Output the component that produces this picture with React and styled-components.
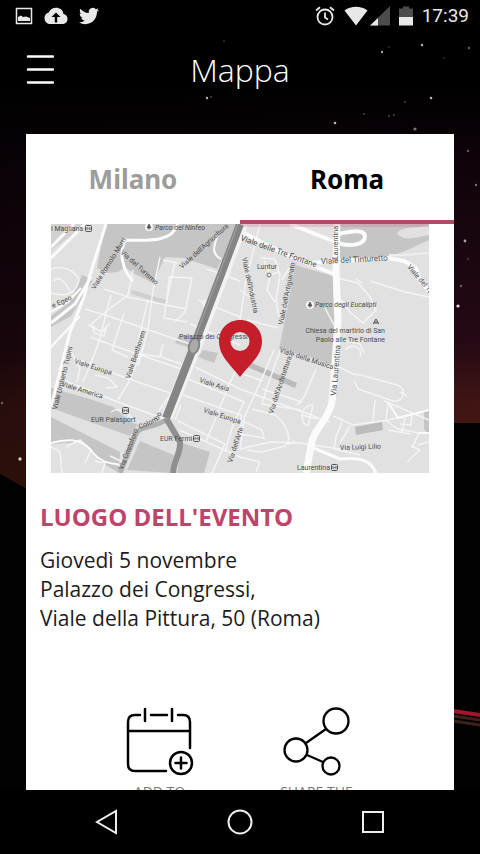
import styled, { createGlobalStyle, css } from 'styled-components'

const GlobalStyle = createGlobalStyle`
  body {
    margin: 0;
    background: #000;
    font-family: "Open Sans", "Noto Sans", sans-serif;
  }

  * {
    box-sizing: border-box;
  }

  button {
    padding: 0;
    border: 0;
    background: none;
    color: inherit;
    font: inherit;
    cursor: pointer;
  }

  svg {
    display: block;
  }
`

const Screen = styled.div`
  position: relative;
  display: flex;
  flex-direction: column;
  height: 100vh;
  overflow: hidden;
  color: #fff;
`

const Sky = styled.svg`
  position: absolute;
  inset: 0;
  z-index: -1;
  width: 100%;
  height: 100%;
`

const StatusBar = styled.div`
  display: flex;
  justify-content: space-between;
  align-items: center;
  height: 32px;
  padding: 0 11px 0 15px;
  color: #e8e8e8;
`

const StatusGroup = styled.div`
  display: flex;
  align-items: center;
  gap: ${props => props.$gap}px;
`

const Clock = styled.time`
  font-family: Roboto, sans-serif;
  font-size: 19px;
  font-weight: 400;
  line-height: 32px;
`

const Header = styled.header`
  display: grid;
  grid-template-columns: 28px 1fr 28px;
  align-items: center;
  height: 76px;
  margin-bottom: 26px;
  padding: 0 26px;
`

const Title = styled.h1`
  margin: 0;
  font-size: 32px;
  font-weight: 300;
  line-height: 40px;
  text-align: center;
`

const Card = styled.main`
  flex: 1;
  min-height: 0;
  margin: 0 26px;
  overflow: hidden;
  background: #fff;
  color: #1c1c1c;
`

const Tabs = styled.div`
  display: grid;
  grid-template-columns: 1fr 1fr;
`

const Tab = styled.button`
  height: 90px;
  padding-top: 4px;
  border-bottom: 4px solid transparent;
  color: #9c9c9c;
  font-family: "Noto Sans", sans-serif;
  font-size: 26px;
  font-weight: 700;

  ${props => props.$active && css`
    color: #000;
    border-color: #b04a66;
  `}
`

const MapImage = styled.svg`
  width: calc(100% - 50px);
  height: auto;
  margin: 0 25px;
  font-family: Roboto, sans-serif;
  font-size: 7px;
  fill: #4c4c4c;
`

const Place = styled.section`
  padding: 28px 14px 0;
`

const PlaceTitle = styled.h2`
  margin: 0 0 13px;
  color: #c0446a;
  font-size: 24px;
  font-weight: 700;
  line-height: 32px;
`

const Address = styled.p`
  margin: 0;
  font-size: 21px;
  line-height: 29px;
`

const Actions = styled.div`
  display: flex;
  justify-content: center;
  gap: 80px;
  padding: 73px 4px 0 0;
`

const Action = styled.button`
  display: flex;
  flex-direction: column;
  align-items: center;
  gap: 4px;
  width: 77px;
  color: #000;

  span {
    color: #777;
    font-size: 14px;
    line-height: 20px;
    white-space: nowrap;
  }
`

const NavBar = styled.nav`
  display: flex;
  justify-content: center;
  align-items: center;
  gap: 101px;
  height: 64px;
  background: #000;
`

const stars = [
  [207, 98, 1.2, 0.8], [211, 97, 1, 0.3], [224, 41, 1, 0.2], [382, 52, 1.2, 0.7],
  [389, 47, 1, 0.2], [422, 45, 1.2, 0.8], [469, 48, 1.2, 0.4], [444, 58, 1, 0.2],
  [431, 98, 1.3, 0.8], [405, 102, 1, 0.3], [335, 123, 1.3, 0.8], [364, 114, 1, 0.3],
  [389, 116, 1, 0.3], [394, 115, 1, 0.3], [415, 129, 1.6, 0.5], [468, 151, 1.2, 0.4],
  [476, 185, 1.2, 0.5], [465, 241, 1.4, 0.7], [468, 259, 1.2, 0.2], [461, 286, 1.2, 0.4],
  [458, 306, 1.6, 1], [2, 403, 1.2, 0.4], [20, 459, 1.7, 0.9],
]

const NightSky = () => (
  <Sky viewBox="0 0 480 854" preserveAspectRatio="xMidYMid slice" aria-hidden="true">
    <defs>
      <linearGradient id="dusk" x1="0" y1="0" x2="0" y2="1">
        <stop offset="0.1" stopColor="#000" />
        <stop offset="0.2" stopColor="#10040b" />
        <stop offset="0.4" stopColor="#250914" />
        <stop offset="0.47" stopColor="#401514" />
        <stop offset="0.57" stopColor="#481a10" />
      </linearGradient>
      <linearGradient id="shade" x1="0" y1="0" x2="1" y2="0">
        <stop offset="0" stopColor="#000" stopOpacity="0.4" />
        <stop offset="1" stopColor="#000" stopOpacity="0" />
      </linearGradient>
    </defs>
    <rect width="480" height="854" fill="url(#dusk)" />
    <rect width="480" height="854" fill="url(#shade)" />
    {stars.map(([x, y, r, o]) => (
      <circle key={`${x}-${y}`} cx={x} cy={y} r={r} fill="#f0dfe2" opacity={o} />
    ))}
    <path d="M0 474 27 489V423H480V854H0Z" fill="#020202" />
    <path d="M453 711 480 715" stroke="#a5152a" strokeWidth="4" />
    <path d="M453 716 480 720M453 721 480 725" stroke="#3a221a" strokeWidth="3" />
  </Sky>
)

/* [text, x, y, rotation, size] */
const labels = [
  ['i Magliana', 51, 231, 0], ['Viale Romolo Murri', 95, 290, -58], ['Via del Turismo', 120, 253, 42],
  ["Viale dell'Agricoltura", 182, 269, -42], ['e Egeo', 53, 308, -24], ['Viale Beethoven', 130, 379, -72],
  ['Viale delle Tre Fontane', 240, 240, 20, 8], ['Viale del Tinturetto', 321, 264, -3, 8],
  ['Viale del Tu', 407, 267, 50], ["Viale dell'Artigianato", 283, 325, -79],
  ['Laurentina', 338, 259, -90], ['Viale Europa', 74, 363, 18], ['Viale America', 61, 386, 17],
  ['Viale Umberto Tupini', 57, 410, -76], ['Viale Asia', 199, 382, 18], ['Viale Europa', 203, 412, 18],
  ['Viale della Musica', 279, 352, 18], ["Via dell'Architettura", 273, 414, -72],
  ['Via Laurentina', 336, 396, -85, 8], ["Via dell'Arte", 232, 463, -72], ['Via Luigi Lilio', 340, 450, -2],
  ['EUR Palasport', 91, 422, 0], ['EUR Fermi', 160, 441, 0], ['Laurentina', 297, 470, 0],
  ['Luntur', 257, 269, 0], ["Viale dell'Industria", 242, 258, 78],
]

const Metro = ({ x, y }) => (
  <g transform={`translate(${x} ${y})`}>
    <rect x="0.5" y="0.5" width="6" height="6" rx="1" fill="#ddd" stroke="#555" />
    <path d="M2 5V2.500L3.500 4 5 2.500V5" fill="none" stroke="#555" strokeWidth="0.8" />
  </g>
)

const CityMap = () => (
  <MapImage viewBox="51 224 378 249" role="img" aria-label="Mappa di Roma EUR">
    <rect x="51" y="224" width="378" height="249" fill="#e1e1e1" />

    {/* parks and stations */}
    <g fill="#c5c5c5">
      <path d="M105 224H240L217 269 196 262 184 258 165 257 153 283 133 273 125 267 118 272 108 273 97 268Z" />
      <path d="M82 275 93 280 82 298 71 316 51 327V316L70 302Z" />
      <path d="M337 224H429V240L405 251 388 257 340 258Z" />
      <path d="M295 265 333 276 335 366 310 357 279 349 288 305Z" />
      <path d="M51 388 90 399 113 407 131 422 138 425 130 436 51 408Z" />
      <path d="M51 417 120 452 119 473 102 463 82 442 51 444Z" />
      <path d="M140 441 176 456 172 473 127 470Z" />
      <path d="M182 443 210 452 204 473H177Z" />
      <path d="M51 224H88L51 250Z" fill="#d2d2d2" />
      <path d="M179 335 197 337 194 349 175 343Z" />
      <path d="M203 350 218 353 214 363 198 357Z" />
      <path d="M241 364 247 361 297 383 295 388Z" fill="#bababa" />
      <path d="M355 427 382 422 383 430 356 435Z" fill="#bcbcbc" />
      <path d="M424 411H429V435L424 429Z" />
      <path d="M132 290 166 300 165 304 131 294Z" fill="#cfcfcf" />
    </g>
    <path d="M397 234C400 226 415 229 429 225V235C417 237 405 242 397 234Z" fill="#e1e1e1" />

    {/* side streets */}
    <g fill="none" stroke="#f4f4f4" strokeWidth="1.500">
      <path d="M51 269C60 265 75 269 79 280 77 292 68 298 51 293M54 281C58 276 65 280 70 292" />
      <path d="M133 270 128 295 108 310 90 325M104 289 128 297 166 305 187 309M160 257 153 290 148 330 138 366M175 262 166 304 164 318 187 322M192 278 169 277 167 302M192 278 185 312 175 322M163 260 178 263" />
      <path d="M85 309 108 316 190 344M111 295 105 318 98 345 83 382M124 313 112 350 128 357M148 300 136 350M88 325 102 332 110 323M93 326 99 331 106 329 104 336 94 333Z" />
      <path d="M70 350 80 368 77 382M90 337 126 350 187 371M77 359 126 378 170 393M63 380 118 402 165 419M144 345 130 380 118 400M163 344 160 357 134 353M158 356 187 366 170 395 158 412M95 375 108 378 117 387 105 388" />
      <path d="M195 367 240 389 330 422M188 379 244 402 233 425 225 452M183 395 241 415 240 436M178 421 225 444 212 473M225 350 240 361 228 387 206 442M181 405 175 420M180 430 240 457" />
      <path d="M207 269 240 281M198 300 240 317M206 300C200 300 203 309 209 307M218 278 210 305M190 324 240 345M260 224 246 280 240 320 250 340M240 290 250 297" />
      <path d="M260 258 275 259 280 275 276 300 279 317M264 260 270 275 279 272M270 277 267 290 275 302M282 280 290 267M247 320 278 328" />
      <path d="M274 350 260 383 244 418 240 450M281 348 266 390 262 404 301 410M316 369 304 397 297 405M240 373 263 381M262 389 302 402M252 409 275 415C286 423 293 439 285 446L262 452 247 450" />
      <path d="M313 405C300 404 299 424 308 426M313 406 308 426M301 415 318 419M240 420 262 430 264 438 241 434M240 449 270 442 300 443 340 449M240 457 260 462 256 472M287 444 295 443 293 440" />
      <path d="M337 366 353 374 361 375 397 385C408 388 404 403 393 401L358 389 354 380M400 392 407 396M384 401 429 420M333 416 353 425 388 420 429 410M375 400 373 421M388 402 386 421 398 429 419 433 412 448M400 424 412 425M405 418 402 432M412 415 411 425M342 422 336 437 334 449 360 455M350 426 340 443M388 430 410 434" />
      <path d="M337 278 358 283 370 297 376 310 363 323 350 312 341 300M370 281 405 292 429 297M325 308 334 325M340 340 360 344 364 353M362 283 356 279M345 350C352 343 363 347 360 357" />
      <path d="M62 473 60 452 51 447M66 447 80 440 91 450 85 463M95 461 105 463 102 473M110 456 125 463M111 412C118 406 128 413 132 418M407 462 420 450 411 446M418 445 429 442" />
    </g>

    {/* wider roads */}
    <g fill="none" stroke="#fbfbfb" strokeLinejoin="round">
      <path d="M51 258 85 224M51 247 74 224M106 224 90 275 84 297 70 332 51 407M51 323 75 304 91 277" strokeWidth="3" />
      <path d="M178 224C172 241 154 241 125 240 119 253 122 270 133 281" strokeWidth="3" />
      <path d="M51 312 68 302 81 288M51 347 80 316" strokeWidth="2" />
      <path d="M51 443C68 439 80 438 91 450 101 464 112 463 120 465" strokeWidth="2" />
      <path d="M218 235C212 249 213 255 221 259" strokeWidth="2" />
      <path d="M242 232 285 254 334 274" strokeWidth="4" />
      <path d="M290 224 338 243C350 247 365 245 365 236 364 229 351 231 339 234" strokeWidth="4" />
      <path d="M310 263 388 258 404 261 416 268 420 281 429 291" strokeWidth="4" />
      <path d="M337 224 336 270 338 320 336 350 332 402C329 420 312 430 311 446L306 473" strokeWidth="7" />
      <path d="M311 447 340 459C358 457 370 459 376 473" strokeWidth="3" />
      <path d="M429 410 398 418 388 402M429 433 419 433" strokeWidth="2" />
    </g>
    <path d="M389 255H405L429 253" fill="none" stroke="#eee" strokeWidth="2" />

    {/* via Cristoforo Colombo */}
    <g fill="none">
      <path d="M242 224 196 346 167 417" stroke="#f2f2f2" strokeWidth="12" />
      <path d="M240 224 194 346 166 418" stroke="#858585" strokeWidth="8" />
      <path d="M238 224 192 346" stroke="#a4a4a4" strokeWidth="1" />
      <path id="colombo" d="M123 470 138 430 158 421 172 392" />
      <path d="M166 420C155 428 140 425 136 434L120 473" stroke="#b0b0b0" strokeWidth="5" />
      <path d="M166 418 180 442C181 453 174 460 173 473" stroke="#909090" strokeWidth="6" />
      <ellipse cx="194" cy="346" rx="5" ry="8" fill="#aaa" stroke="#858585" strokeWidth="2" transform="rotate(15 194 346)" />
    </g>

    <rect x="241" y="224" width="188" height="3" fill="#d9607f" opacity="0.250" />

    {labels.map(([text, x, y, angle, size = 7]) => (
      <text key={`${text}-${x}`} x={x} y={y} transform={`rotate(${angle} ${x} ${y})`} fontSize={size}>
        {text}
      </text>
    ))}
    <text>
      <textPath href="#colombo">Via Cristoforo Colombo</textPath>
    </text>
    <text x="179" y="339">Palazzo dei Congressi</text>
    <text x="155" y="230" fontStyle="italic">Parco del Ninfeo</text>
    <text x="315" y="307" fontStyle="italic">Parco degli Eucalipti</text>
    <text x="385" y="333" textAnchor="end">Chiesa del martirio di San</text>
    <text x="385" y="342" textAnchor="end">Paolo alle Tre Fontane</text>

    {[[149, 227], [310, 305]].map(([x, y]) => (
      <g key={x}>
        <circle cx={x} cy={y} r="4" fill="#f8f8f8" />
        <path d={`M${x} ${y - 3}l2 4h-4zM${x} ${y}v3`} fill="#555" stroke="#555" strokeWidth="0.8" />
      </g>
    ))}
    <path d="M373 324 376 319 379 324M375 324V322H377V324" fill="none" stroke="#555" strokeWidth="1" />
    <circle cx="269" cy="275" r="2" fill="none" stroke="#777" />
    <Metro x={85} y={225} />
    <Metro x={122} y={407} />
    <Metro x={193} y={435} />
    <Metro x={331} y={464} />

    <path
      fill="#c41e2a"
      fillRule="evenodd"
      d="M240 320C228 320 219 329 219 341 219 356 230 364 240 377 250 364 262 356 262 341 262 329 252 320 240 320ZM240 332A9.500 9.500 0 1 1 240 351 9.500 9.500 0 0 1 240 332Z"
    />
  </MapImage>
)

const App = () => {
  return (
    <Screen>
      <GlobalStyle />
      <NightSky />

      <StatusBar>
        <StatusGroup $gap={11}>
          <svg width="18" height="18" viewBox="0 0 18 18" fill="none">
            <rect x="1.500" y="1.500" width="15" height="15" stroke="currentColor" strokeWidth="1.500" />
            <path d="M3 14V10L6 8.500 8 10 11 9.500 15 11V14Z" fill="currentColor" />
          </svg>
          <svg width="24" height="18" viewBox="0 0 24 18">
            <path fill="currentColor" d="M19.500 7C19 3 16 .8 12 .8 8.500.8 6 2.500 4.800 5.500 2 6 .5 8.500.5 11c0 3.500 2.500 6 5.500 6h12.500c3 0 5-2.300 5-5 0-2.800-1.800-4.700-4-5Z" />
            <path fill="#000" d="M12 5.500 16.500 10H13.200V15.500H10.800V10H7.500Z" />
          </svg>
          <svg width="20" height="18" viewBox="0 2 24 20" fill="currentColor">
            <path d="M23.950 4.570a10 10 0 0 1-2.820.77 4.960 4.960 0 0 0 2.160-2.720c-.95.55-2 .95-3.130 1.180a4.920 4.920 0 0 0-8.380 4.480C7.690 8.090 4.070 6.130 1.640 3.160a4.820 4.820 0 0 0-.67 2.480c0 1.710.87 3.210 2.190 4.100a4.900 4.900 0 0 1-2.230-.62v.06a4.920 4.920 0 0 0 3.950 4.830 5 5 0 0 1-2.210.08 4.940 4.940 0 0 0 4.600 3.420A9.870 9.870 0 0 1 0 19.540a14 14 0 0 0 7.550 2.210c9.050 0 14-7.500 14-13.980 0-.21 0-.42-.02-.63a9.940 9.940 0 0 0 2.460-2.550Z" />
          </svg>
        </StatusGroup>
        <StatusGroup $gap={9}>
          <svg width="20" height="20" viewBox="0 0 20 20" fill="none" stroke="currentColor" strokeWidth="1.800">
            <circle cx="10" cy="11" r="7.500" />
            <path d="M10 6.500V11.500L13 13.500M1 4.500 5 1.200M19 4.500 15 1.200" />
          </svg>
          <StatusGroup $gap={2}>
            <svg width="24" height="20" viewBox="0 0 24 20" fill="currentColor">
              <path d="M.5 4.500C7-.5 17-.5 23.500 4.500L12 19.500Z" />
            </svg>
            <svg width="20" height="20" viewBox="0 0 20 20">
              <path d="M20 0V19.500H0Z" fill="#4c4c4c" />
              <path d="M8 12V19.500H0Z" fill="currentColor" />
            </svg>
          </StatusGroup>
          <svg width="14" height="20" viewBox="0 0 14 20">
            <path d="M0 2.500H4V.5H10V2.500H14V11H0Z" fill="#4c4c4c" />
            <path d="M0 11H14V19.500H0Z" fill="currentColor" />
          </svg>
          <Clock>17:39</Clock>
        </StatusGroup>
      </StatusBar>

      <Header>
        <button aria-label="Menu">
          <svg width="28" height="32" viewBox="0 0 28 32" stroke="#fff" strokeWidth="2.500" strokeLinecap="round">
            <path d="M2 2.500H27M2 15.500H27M2 28.500H27" />
          </svg>
        </button>
        <Title>Mappa</Title>
      </Header>

      <Card>
        <Tabs role="tablist">
          <Tab role="tab" aria-selected="false">Milano</Tab>
          <Tab role="tab" aria-selected="true" $active>Roma</Tab>
        </Tabs>

        <CityMap />

        <Place>
          <PlaceTitle>LUOGO DELL'EVENTO</PlaceTitle>
          <Address>
            Giovedì 5 novembre<br />
            Palazzo dei Congressi,<br />
            Viale della Pittura, 50 (Roma)
          </Address>
        </Place>

        <Actions>
          <Action>
            <svg width="68" height="72" viewBox="0 0 68 72" fill="none" stroke="currentColor" strokeWidth="2.500" strokeLinecap="round">
              <path d="M40 65H9Q2 65 2 58V16Q2 9 9 9H14M25 9H41M52 9H57Q64 9 64 16V42M2 25H64M19 3V15M46 3V15" />
              <circle cx="55" cy="57" r="11" />
              <path d="M55 51.500V62.500M49.500 57H60.500" />
            </svg>
            <span>ADD TO</span>
          </Action>
          <Action>
            <svg width="68" height="72" viewBox="0 0 68 72" fill="none" stroke="currentColor" strokeWidth="2.300">
              <circle cx="53" cy="15" r="12.500" />
              <circle cx="13" cy="44" r="11.500" />
              <circle cx="48" cy="60" r="8.500" />
              <path d="M23 37 43 23M24 49 40 56" />
            </svg>
            <span>SHARE THE</span>
          </Action>
        </Actions>
      </Card>

      <NavBar>
        <button aria-label="Indietro">
          <svg width="32" height="32" viewBox="0 0 32 32" fill="none" stroke="#eee" strokeWidth="2">
            <path d="M25 5V27L6 16Z" />
          </svg>
        </button>
        <button aria-label="Home">
          <svg width="32" height="32" viewBox="0 0 32 32" fill="none" stroke="#eee" strokeWidth="2">
            <circle cx="16" cy="16" r="11.500" />
          </svg>
        </button>
        <button aria-label="Recenti">
          <svg width="32" height="32" viewBox="0 0 32 32" fill="none" stroke="#eee" strokeWidth="2">
            <rect x="6" y="6" width="20" height="20" />
          </svg>
        </button>
      </NavBar>
    </Screen>
  )
}

export default App
